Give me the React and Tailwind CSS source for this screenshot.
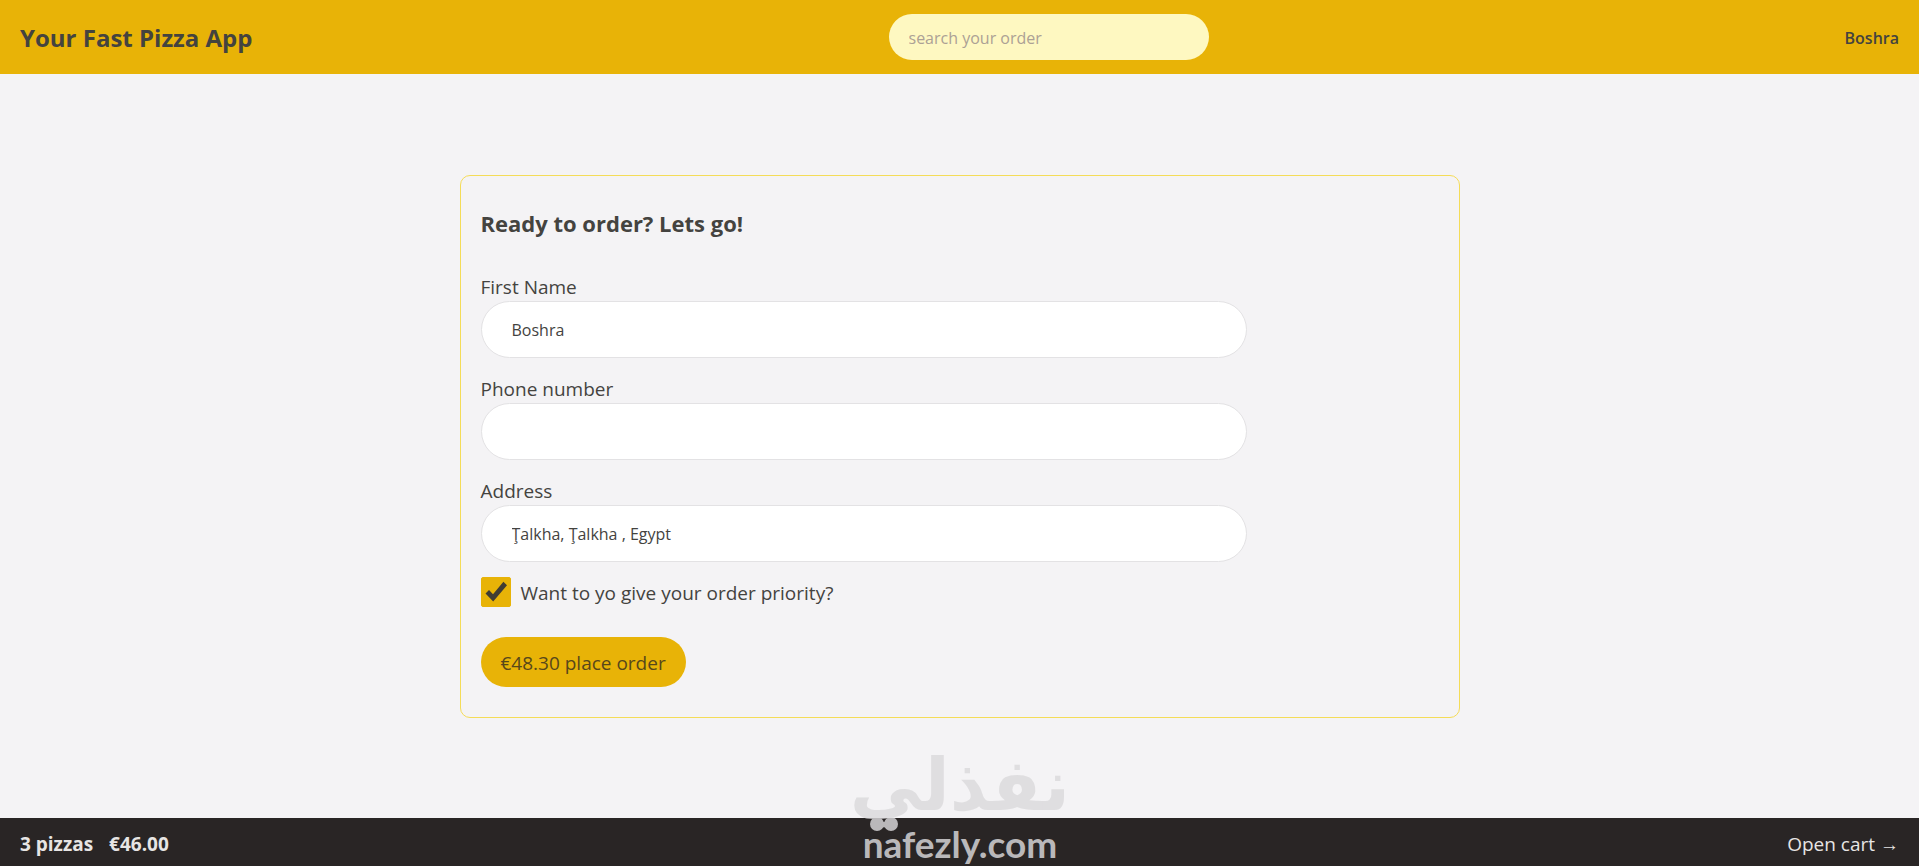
import { useState } from "react";

const fields = [
  { id: "firstName", label: "First Name", type: "text", value: "Boshra" },
  { id: "phone", label: "Phone number", type: "tel", value: "" },
  { id: "address", label: "Address", type: "text", value: "Ţalkha, Ţalkha , Egypt" },
];

function Header() {
  return (
    <header className="flex items-center justify-between bg-[#e8b307] px-5 py-[14px] leading-[30px]">
      <a href="#home" className="pt-0.5 text-2xl leading-[30px] font-bold">
        Your Fast Pizza App
      </a>
      <input
        type="search"
        aria-label="Search your order"
        placeholder="search your order"
        className="h-[46px] w-80 rounded-full bg-[#fef8c1] px-5 pt-0.5 text-base outline-none placeholder:text-[#aca195]"
      />
      <p className="pt-0.5 text-base leading-[30px] font-semibold">Boshra</p>
    </header>
  );
}

function Field({ id, label, type, value }) {
  return (
    <div className="mb-[15px]">
      <label htmlFor={id} className="block pt-0.5 leading-7">
        {label}
      </label>
      <input
        id={id}
        type={type}
        defaultValue={value}
        className="block h-[57px] w-4/5 rounded-full border border-[#e3e2e4] bg-white px-[30px] pt-0.5 text-base outline-none"
      />
    </div>
  );
}

function OrderForm() {
  const [priority, setPriority] = useState(true);
  return (
    <form
      onSubmit={(e) => e.preventDefault()}
      className="w-full max-w-[1000px] rounded-[10px] border border-[#f4dc58] px-5 py-[30px]"
    >
      <h2 className="mb-[31px] text-[22px] leading-[34px] font-bold">Ready to order? Lets go!</h2>
      {fields.map((f) => (
        <Field key={f.id} {...f} />
      ))}
      <div className="mb-[30px] flex items-center gap-[10px]">
        <span className="relative flex size-[30px]">
          <input
            id="priority"
            type="checkbox"
            checked={priority}
            onChange={(e) => setPriority(e.target.checked)}
            className="size-[30px] appearance-none rounded-[2px] border border-[#e8b307] bg-white checked:bg-[#e8b307]"
          />
          {priority && (
            <svg viewBox="0 0 30 30" className="pointer-events-none absolute inset-0" aria-hidden="true">
              <path d="M4.5 16.6 L8 13.1 L12 17.2 L22.4 4.8 L26 8.3 L12.2 24.5 Z" fill="#403c33" />
            </svg>
          )}
        </span>
        <label htmlFor="priority" className="pt-0.5 leading-7">
          Want to yo give your order priority?
        </label>
      </div>
      <button type="submit" className="h-[50px] rounded-full bg-[#e8b307] px-5 pt-0.5 text-[#57471b]">
        €48.30 place order
      </button>
    </form>
  );
}

function Watermark() {
  return (
    <svg
      viewBox="0 0 260 160"
      className="pointer-events-none absolute bottom-0 left-1/2 h-[160px] w-[260px] -translate-x-1/2 overflow-visible"
      aria-hidden="true"
    >
      <g fill="#dbdadc" opacity="0.815" textAnchor="middle" fontWeight="700">
        <text x="130" y="104" fontSize="72" fontFamily="DejaVu Sans, sans-serif">
          نفذلي
        </text>
        <circle cx="47" cy="118" r="7" />
        <circle cx="61" cy="118" r="7" />
        <text x="130" y="152" fontSize="37" fontFamily="Lato, sans-serif">
          nafezly.com
        </text>
      </g>
    </svg>
  );
}

export default function App() {
  return (
    <div className="relative flex min-h-screen flex-col bg-[#f4f3f5] font-['Open_Sans','Noto_Sans',sans-serif] text-[19px] leading-[30px] text-[#44433f]">
      <Header />
      <main className="flex flex-1 items-center justify-center">
        <OrderForm />
      </main>
      <footer className="flex h-12 items-center justify-between bg-[#292525] px-5 pt-1 text-[#e7e5e4]">
        <p className="flex gap-4 font-bold">
          <span>3 pizzas</span>
          <span>€46.00</span>
        </p>
        <a href="#cart">Open cart →</a>
      </footer>
      <Watermark />
    </div>
  );
}
